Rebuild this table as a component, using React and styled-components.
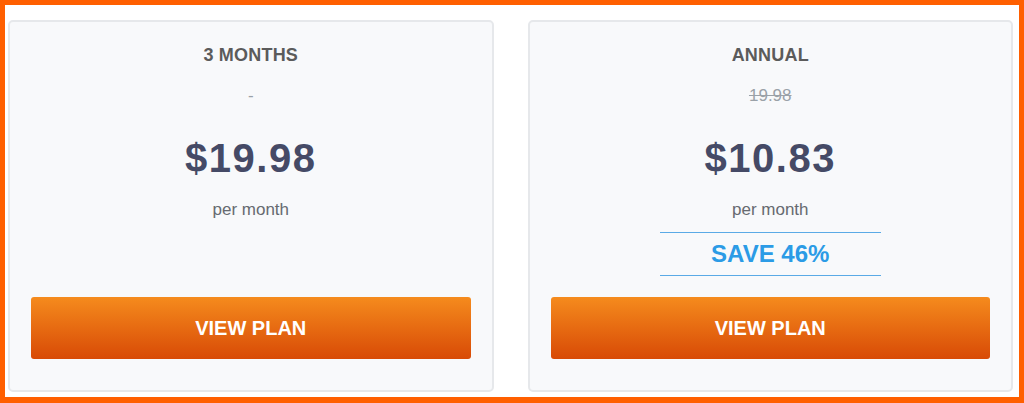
import React from "react";
import styled, { createGlobalStyle } from "styled-components";

const GlobalStyle = createGlobalStyle`
    html, body {
        margin: 0;
        padding: 0;
        background: #ffffff;
    }
    body {
        font-family: "Liberation Sans", Arial, sans-serif;
    }
`;

const Frame = styled.div`
    box-sizing: border-box;
    width: 1024px;
    height: 403px;
    border-style: solid;
    border-color: #ff5f00;
    border-width: 5px 5px 6px 5px;
    padding: 15px 6px 5px 3px;
    background: #ffffff;
    display: grid;
    grid-template-columns: 1fr 1fr;
    column-gap: 34px;
`;

const Card = styled.div`
    box-sizing: border-box;
    display: flex;
    flex-direction: column;
    align-items: center;
    background: #f8f9fb;
    border: 2px solid #e6e8eb;
    border-radius: 5px;
    padding: 20px 21px 31px;
    text-align: center;
`;

const Title = styled.div`
    font-size: 18px;
    line-height: 26px;
    font-weight: 700;
    color: #5b5b5b;
    letter-spacing: 0.2px;
`;

const OldPrice = styled.div`
    margin-top: 16px;
    font-size: 17px;
    line-height: 24px;
    color: #9aa1a8;
    text-decoration: ${props => (props.strike ? "line-through" : "none")};
`;

const Price = styled.div`
    margin-top: 26px;
    font-size: 40px;
    line-height: 48px;
    font-weight: 700;
    letter-spacing: 1.5px;
    color: #454a66;
`;

const Period = styled.div`
    margin-top: 16px;
    font-size: 17px;
    line-height: 24px;
    color: #666a70;
`;

const Save = styled.div`
    margin-top: 10px;
    width: 221px;
    box-sizing: border-box;
    border-top: 1px solid #5aaae6;
    border-bottom: 1px solid #5aaae6;
    font-size: 24px;
    line-height: 42px;
    font-weight: 700;
    color: #2b9be6;
`;

const Button = styled.button`
    margin-top: auto;
    width: 100%;
    height: 62px;
    border: none;
    border-radius: 3px;
    background: linear-gradient(to bottom, #f58b1d 0%, #d84a06 100%);
    color: #ffffff;
    font-family: "Liberation Sans", Arial, sans-serif;
    font-size: 20px;
    font-weight: 700;
    cursor: pointer;
`;

const plans = [
    { id: 1, title: "3 MONTHS", old: "-", strike: false, price: "$19.98" },
    { id: 2, title: "ANNUAL", old: "19.98", strike: true, price: "$10.83", save: "SAVE 46%" }
];

const App = () => (
    <>
        <GlobalStyle />
        <Frame>
            {plans.map(plan => (
                <Card key={plan.id}>
                    <Title>{plan.title}</Title>
                    <OldPrice strike={plan.strike}>{plan.old}</OldPrice>
                    <Price>{plan.price}</Price>
                    <Period>per month</Period>
                    {plan.save && <Save>{plan.save}</Save>}
                    <Button>VIEW PLAN</Button>
                </Card>
            ))}
        </Frame>
    </>
);

export default App;
